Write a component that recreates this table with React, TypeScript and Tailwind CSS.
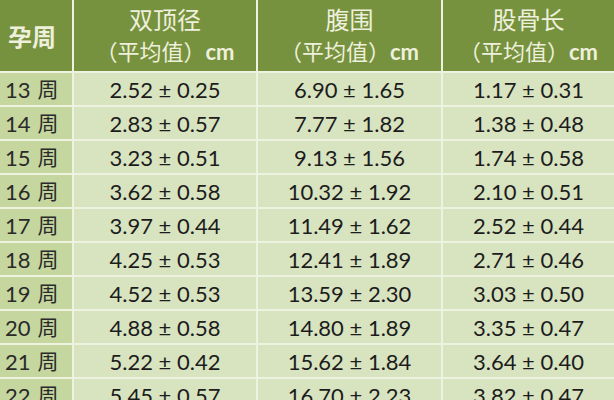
import { Fragment } from "react";

const rows: [string, string, string, string][] = [
  ["13", "2.52 ± 0.25", "6.90 ± 1.65", "1.17 ± 0.31"],
  ["14", "2.83 ± 0.57", "7.77 ± 1.82", "1.38 ± 0.48"],
  ["15", "3.23 ± 0.51", "9.13 ± 1.56", "1.74 ± 0.58"],
  ["16", "3.62 ± 0.58", "10.32 ± 1.92", "2.10 ± 0.51"],
  ["17", "3.97 ± 0.44", "11.49 ± 1.62", "2.52 ± 0.44"],
  ["18", "4.25 ± 0.53", "12.41 ± 1.89", "2.71 ± 0.46"],
  ["19", "4.52 ± 0.53", "13.59 ± 2.30", "3.03 ± 0.50"],
  ["20", "4.88 ± 0.58", "14.80 ± 1.89", "3.35 ± 0.47"],
  ["21", "5.22 ± 0.42", "15.62 ± 1.84", "3.64 ± 0.40"],
  ["22", "5.45 ± 0.57", "16.70 ± 2.23", "3.82 ± 0.47"],
];

const cjk = "font-['Noto_Sans_CJK_SC',sans-serif]";
const num = "font-['Lato','Noto_Sans_CJK_SC',sans-serif]";

function HeadCell({ title }: { title: string }) {
  return (
    <div className={`flex flex-col items-center justify-center bg-[#77923f] text-[#eef0dc] ${cjk}`}>
      <div className="text-[24px] leading-[30px]">{title}</div>
      <div className="flex items-baseline text-[22px] leading-[32px]">
        <span>（平均值）</span>
        <span className={`${num} font-bold`}>cm</span>
      </div>
    </div>
  );
}

export default function App() {
  return (
    <div className="h-[400px] w-[614px] overflow-hidden bg-[#eef3e1]">
      <div className="grid grid-cols-[72px_182px_183px_1fr] grid-rows-[71px] auto-rows-[32px] gap-[2px]">
        <div className={`flex items-center bg-[#77923f] pl-[8px] text-[24px] font-bold text-[#eef0dc] ${cjk}`}>
          孕周
        </div>
        <HeadCell title="双顶径" />
        <HeadCell title="腹围" />
        <HeadCell title="股骨长" />

        {rows.map((r) => (
          <Fragment key={r[0]}>
            <div className={`flex items-center bg-[#c5d69f] pl-[5px] text-[22px] text-[#2a2a2a] ${num}`}>
              {r[0]}
              <span className={`ml-[7px] text-[21px] ${cjk}`}>周</span>
            </div>
            {r.slice(1).map((v, i) => (
              <div
                key={i}
                className={`flex items-center justify-center bg-[#d8e3c0] text-[22px] text-[#1c1c1c] ${num}`}
              >
                {v}
              </div>
            ))}
          </Fragment>
        ))}
      </div>
    </div>
  );
}
